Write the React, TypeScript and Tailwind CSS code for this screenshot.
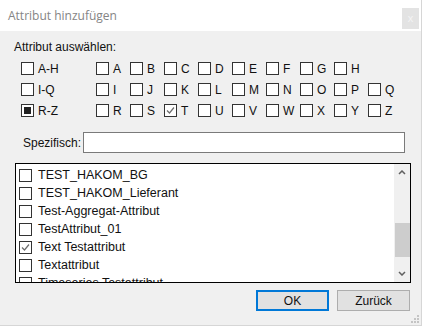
import React from "react";

const rows = [
  { group: "A-H", letters: ["A", "B", "C", "D", "E", "F", "G", "H"] },
  { group: "I-Q", letters: ["I", "J", "K", "L", "M", "N", "O", "P", "Q"] },
  { group: "R-Z", letters: ["R", "S", "T", "U", "V", "W", "X", "Y", "Z"] },
];

const items = [
  { name: "TEST_HAKOM_BG", checked: false },
  { name: "TEST_HAKOM_Lieferant", checked: false },
  { name: "Test-Aggregat-Attribut", checked: false },
  { name: "TestAttribut_01", checked: false },
  { name: "Text Testattribut", checked: true },
  { name: "Textattribut", checked: false },
  { name: "Timeseries Testattribut", checked: false },
];

function Box({ state }: { state?: "check" | "square" | "greycheck" }) {
  return (
    <div className="w-[13px] h-[13px] border border-[#333333] bg-white flex items-center justify-center shrink-0">
      {state === "square" && <div className="w-[7px] h-[7px] bg-[#222222]" />}
      {(state === "check" || state === "greycheck") && (
        <svg width="9" height="9" viewBox="0 0 9 9">
          <path d="M1 4.5 L3.5 7 L8 1.5" fill="none" stroke={state === "greycheck" ? "#6d6d6d" : "#333"} strokeWidth="1.2" />
        </svg>
      )}
    </div>
  );
}

export default function App() {
  return (
    <div className="w-[424px] h-[328px] bg-white font-['Liberation_Sans',sans-serif]">
      <div className="w-[422px] h-[326px] bg-[#f0f0f0] border-r border-b border-[#d6d6d6] flex flex-col">
        {/* title bar */}
        <div className="h-[31px] bg-white flex items-center pl-[8px] pr-[2px] shrink-0">
          <span className="text-[12px] text-[#858585] font-['Open_Sans',sans-serif]">Attribut hinzufügen</span>
          <div className="ml-auto w-[17px] h-[21px] mt-[6px] bg-[#e3e3e3] flex items-center justify-center text-[11px] text-[#f4f4f4]">x</div>
        </div>

        <div className="pl-[14px] pt-[9px] text-[12px] text-[#111] leading-[14px]">Attribut auswählen:</div>

        {/* letter filter */}
        <div className="flex flex-col gap-[8px] mt-[8px] pl-[21px]">
          {rows.map((r) => (
            <div key={r.group} className="flex items-center h-[13px]">
              <div className="w-[75px] flex items-center gap-[4px]">
                <Box state={r.group === "R-Z" ? "square" : undefined} />
                <span className="text-[12px] text-[#111]">{r.group}</span>
              </div>
              {r.letters.map((l) => (
                <div key={l} className="w-[34px] flex items-center gap-[4px]">
                  <Box state={l === "T" ? "greycheck" : undefined} />
                  <span className="text-[12px] text-[#111]">{l}</span>
                </div>
              ))}
            </div>
          ))}
        </div>

        {/* specific */}
        <div className="flex items-center mt-[15px] pl-[23px]">
          <span className="text-[12px] text-[#111] w-[60px]">Spezifisch:</span>
          <div className="w-[322px] h-[21px] bg-white border border-[#7a7a7a]" />
        </div>

        {/* list */}
        <div className="ml-[15px] mt-[10px] w-[396px] h-[120px] border border-black bg-white flex overflow-hidden">
          <div className="flex-1 flex flex-col pl-[3px] pt-[2px] overflow-hidden">
            {items.map((it) => (
              <div key={it.name} className="h-[18px] flex items-center gap-[6px] shrink-0">
                <Box state={it.checked ? "greycheck" : undefined} />
                <span className="text-[12.5px] text-[#111]">{it.name}</span>
              </div>
            ))}
          </div>
          <div className="w-[16px] bg-[#f0f0f0] flex flex-col items-center">
            <div className="h-[17px] flex items-center justify-center">
              <svg width="8" height="5" viewBox="0 0 8 5">
                <path d="M1 4 L4 1 L7 4" fill="none" stroke="#606060" strokeWidth="1.5" />
              </svg>
            </div>
            <div className="h-[42px]" />
            <div className="w-[15px] h-[34px] bg-[#cdcdcd]" />
            <div className="flex-1" />
            <div className="h-[17px] flex items-center justify-center">
              <svg width="8" height="5" viewBox="0 0 8 5">
                <path d="M1 1 L4 4 L7 1" fill="none" stroke="#606060" strokeWidth="1.5" />
              </svg>
            </div>
          </div>
        </div>

        {/* buttons */}
        <div className="flex justify-end gap-[8px] mt-[7px] pr-[11px]">
          <button className="w-[73px] h-[21px] bg-[#e1e1e1] border-2 border-[#0078d7] text-[12px] text-[#111]">OK</button>
          <button className="w-[73px] h-[21px] bg-[#e1e1e1] border border-[#adadad] text-[12px] text-[#111]">Zurück</button>
        </div>

        {/* grip */}
        <div className="flex justify-end pr-[2px] mt-[4px]">
          <svg width="8" height="8" viewBox="0 0 8 8">
            <rect x="6" y="0" width="2" height="2" fill="#c4c4c4" />
            <rect x="3" y="3" width="2" height="2" fill="#c4c4c4" />
            <rect x="6" y="3" width="2" height="2" fill="#c4c4c4" />
            <rect x="0" y="6" width="2" height="2" fill="#c4c4c4" />
            <rect x="3" y="6" width="2" height="2" fill="#c4c4c4" />
            <rect x="6" y="6" width="2" height="2" fill="#c4c4c4" />
          </svg>
        </div>
      </div>
    </div>
  );
}
